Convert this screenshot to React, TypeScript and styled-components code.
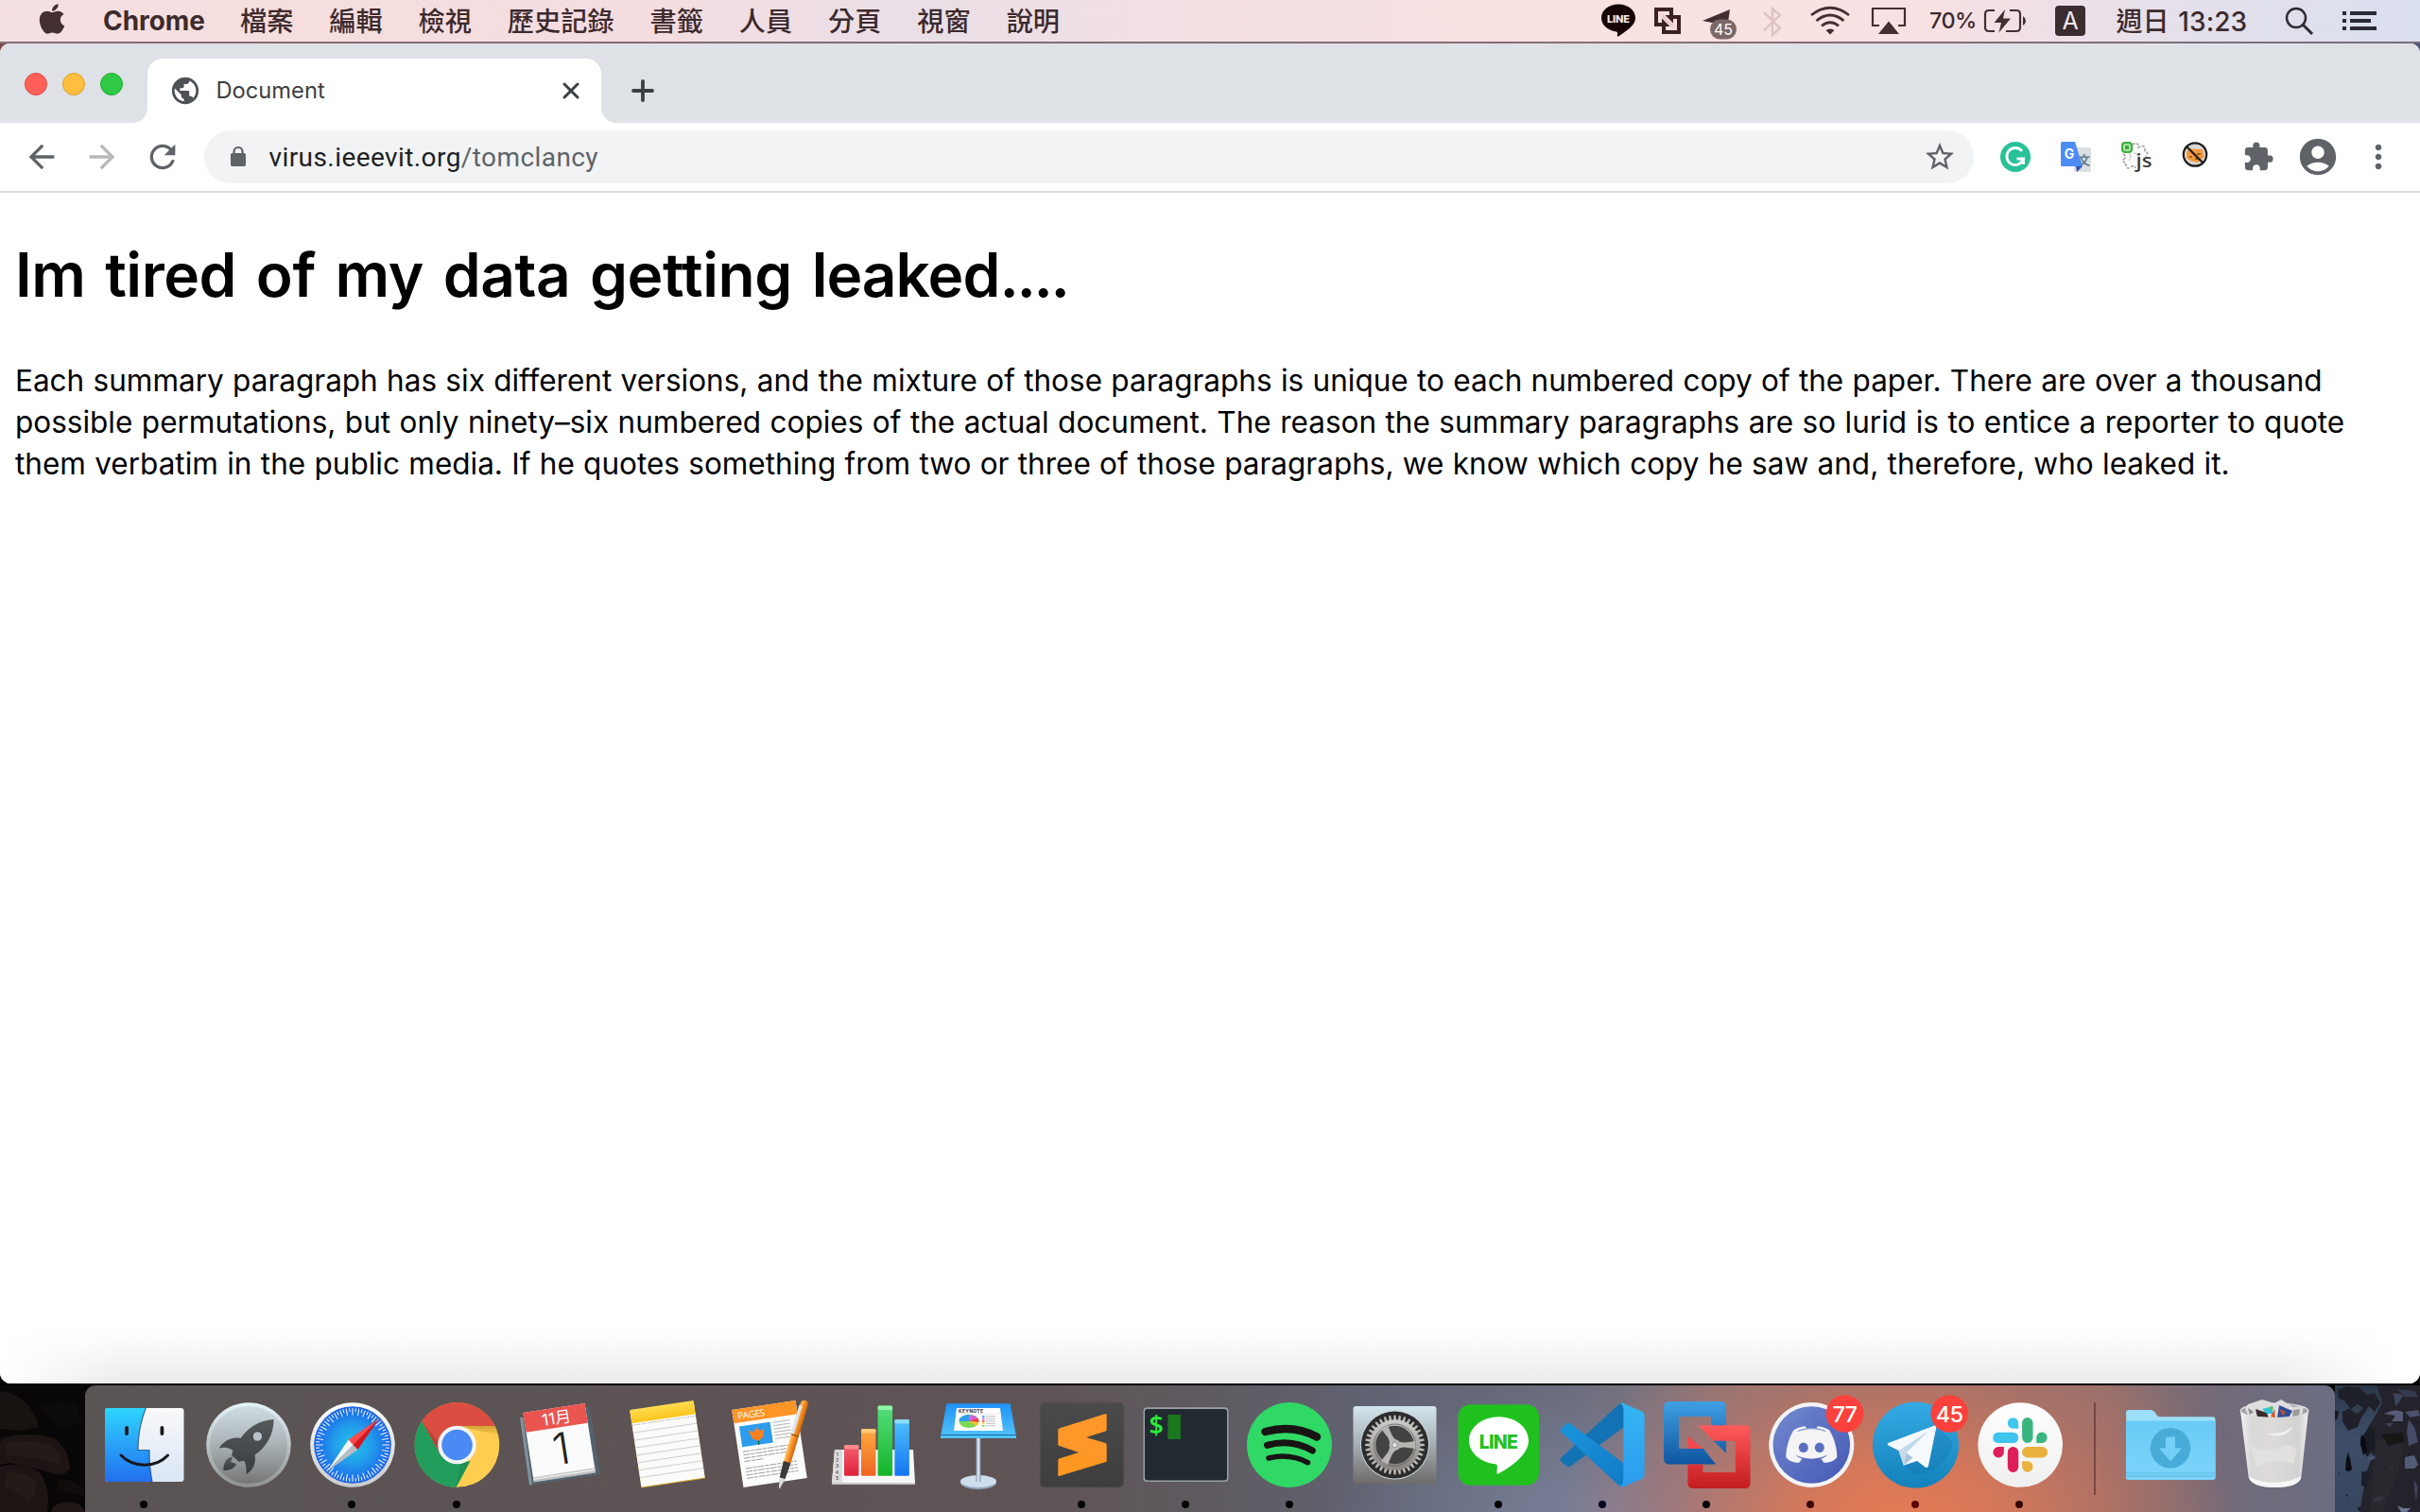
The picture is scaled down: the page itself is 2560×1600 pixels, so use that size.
import React from "react";
import styled, { createGlobalStyle } from "styled-components";
import { FaApple } from "react-icons/fa";
import {
  MdPublic,
  MdArrowBack,
  MdArrowForward,
  MdRefresh,
  MdStarBorder,
  MdExtension,
  MdAccountCircle,
  MdMoreVert,
} from "react-icons/md";

const GlobalStyle = createGlobalStyle`
  * { box-sizing: border-box; }
  html, body { margin: 0; padding: 0; background: #0b0a0c; }
  svg { display: block; flex: none; }
`;

const UI_FONT = `Inter, "Noto Sans CJK TC", sans-serif`;

/* ---------- desktop ---------- */

const Desktop = styled.div`
  width: 2560px;
  height: 1600px;
  overflow: hidden;
  display: flex;
  flex-direction: column;
  font-family: ${UI_FONT};
  background: linear-gradient(180deg, rgba(6, 6, 8, 0) 50%, #060608 60%),
    linear-gradient(90deg, #7d4a4c 0%, #6f4347 40%, #5a3f4e 50%, #7b4b4e 66%, #6b4650 82%, #3c3f5e 92%, #4a5378 100%);
`;

/* ---------- menu bar ---------- */

const MenuBar = styled.header`
  height: 46px;
  flex: none;
  display: flex;
  align-items: center;
  border-bottom: 2px solid rgba(40, 15, 30, 0.55);
  color: #3d2a2d;
  background: linear-gradient(
    90deg,
    #f4dfe1 0%,
    #f6dede 12%,
    #f4dde0 27%,
    #eadfe7 37%,
    #ecdfe5 42%,
    #f4e0e2 52%,
    #fae2e1 66%,
    #f7e1e2 80%,
    #ebdfe8 86%,
    #e2e0eb 92%,
    #dadfee 100%
  );
`;

const AppleSlot = styled.div`
  width: 109px;
  padding-left: 41px;
  margin-top: -5px;
`;

const AppName = styled.span`
  width: 145px;
  font-size: 27.9px;
  font-weight: 700;
  line-height: 44px;
  letter-spacing: 0;
`;

const MenuList = styled.nav`
  display: flex;
  gap: 37.9px;
  margin-top: -2px;
`;

const MenuItem = styled.span`
  font-family: "Noto Sans CJK TC", sans-serif;
  font-size: 28.2px;
  font-weight: 500;
  line-height: 44px;
  white-space: nowrap;
`;

const StatusArea = styled.div`
  margin-left: auto;
  display: flex;
  align-items: center;
  height: 44px;
`;

const StatusItem = styled.div<{ $w: number }>`
  width: ${(p) => p.$w}px;
  height: 44px;
  flex: none;
  display: flex;
  align-items: center;
  white-space: nowrap;
`;

const Percent = styled.span`
  font-size: 23.5px;
  letter-spacing: -0.6px;
  font-weight: 500;
  margin-top: -1px;
`;

const Clock = styled.span`
  font-size: 28px;
  font-weight: 500;
  letter-spacing: 0.1px;
  word-spacing: 2px;
  margin-top: -2px;
`;

const Glyph = ({ w, children }: { w: number; children: React.ReactNode }) => (
  <svg width={w} height={44} viewBox={`0 0 ${w} 44`} fill="none">
    {children}
  </svg>
);

const INK = "#432e31";

/* ---------- browser ---------- */

const BrowserWindow = styled.section`
  height: 1418px;
  flex: none;
  display: flex;
  flex-direction: column;
  border-radius: 10px 10px 12px 12px;
  overflow: hidden;
  background: #fff;
`;

const TabStrip = styled.div`
  height: 84px;
  flex: none;
  display: flex;
  align-items: flex-end;
  background: #dee1e6;
`;

const TrafficLights = styled.div`
  width: 140px;
  height: 84px;
  padding: 31px 0 0 26px;
  display: flex;
  gap: 16px;
`;

const Light = styled.span<{ $fill: string; $edge: string }>`
  width: 24px;
  height: 24px;
  border-radius: 50%;
  background: ${(p) => p.$fill};
  border: 1px solid ${(p) => p.$edge};
`;

const TabFlare = styled.span<{ $side: "left" | "right" }>`
  width: 16px;
  height: 16px;
  background: radial-gradient(
    circle at ${(p) => (p.$side === "left" ? "0 0" : "16px 0")},
    #dee1e6 15.5px,
    #fff 16.5px
  );
`;

const Tab = styled.div`
  width: 480px;
  height: 68px;
  padding: 0 20px 0 23px;
  border-radius: 16px 16px 0 0;
  background: #fff;
  display: flex;
  align-items: center;
  color: #3c4043;
`;

const TabTitle = styled.span`
  margin: -2px 0 0 15.5px;
  flex: 1;
  font-size: 23.7px;
  font-weight: 400;
`;

const NewTab = styled.div`
  height: 68px;
  padding-left: 16px;
  display: flex;
  align-items: center;
`;

const Toolbar = styled.div`
  height: 74px;
  flex: none;
  display: flex;
  align-items: center;
  border-bottom: 2px solid #dadce0;
  background: #fff;
  color: #5f6368;
`;

const NavButtons = styled.div`
  width: 216px;
  flex: none;
  padding-left: 24px;
  display: flex;
  gap: 24px;
`;

const NavButton = styled.span<{ $off?: boolean }>`
  opacity: ${(p) => (p.$off ? 0.45 : 1)};
`;

const Omnibox = styled.div`
  width: 1872px;
  flex: none;
  height: 56px;
  border-radius: 28px;
  background: #f1f3f4;
  display: flex;
  align-items: center;
  padding: 0 18px 0 24px;
`;

const Url = styled.span`
  flex: 1;
  margin-left: 20.5px;
  font-family: Roboto, sans-serif;
  font-size: 28px;
  letter-spacing: 0.42px;
  color: #5f6368;
`;

const Host = styled.span`
  color: #202124;
`;

const Extensions = styled.div`
  flex: 1;
  min-width: 0;
  height: 72px;
  display: flex;
  align-items: center;
`;

const ExtensionSlot = styled.div<{ $w: number }>`
  width: ${(p) => p.$w}px;
  flex: none;
  display: flex;
  justify-content: center;
`;

const Page = styled.main`
  flex: 1;
  display: flex;
  flex-direction: column;
  padding: 0 16px;
  color: #000;
  font-family: Inter, sans-serif;
`;

const Heading = styled.h1`
  margin: 42px 0 0;
  font-size: 64px;
  line-height: 90px;
  font-weight: 600;
  letter-spacing: -0.45px;
  word-spacing: 5.1px;
  white-space: nowrap;
`;

const HeadingTail = styled.span`
  letter-spacing: -1px;
`;

const Dots = styled.span`
  letter-spacing: -2.4px;
`;

const Paragraph = styled.p`
  margin: 45px 0 0;
  font-size: 31.5px;
  line-height: 44px;
  flex: 1;
`;

const Line = styled.span<{ $gap: number }>`
  display: block;
  white-space: nowrap;
  word-spacing: ${(p) => p.$gap}px;
`;

const DockShade = styled.div`
  height: 64px;
  margin: 0 -16px;
  background: linear-gradient(90deg, #fff 0%, rgba(255, 255, 255, 0) 5%, rgba(255, 255, 255, 0) 94%, #fff 99%),
    linear-gradient(180deg, #fff 0%, #fcfcfc 25%, #f4f4f4 60%, #ebebeb 100%);
`;

/* ---------- dock ---------- */

const BottomArea = styled.footer`
  height: 136px;
  flex: none;
  display: flex;
  align-items: flex-end;
  background: #020203;
`;

const DockPanel = styled.div`
  width: 2380px;
  height: 134px;
  padding-left: 6.8px;
  border-radius: 11px 11px 0 0;
  display: flex;
  background: radial-gradient(ellipse 360px 240px at 1920px 150px, #e67b54 0%, rgba(222, 120, 86, 0.88) 30%, rgba(200, 114, 94, 0.45) 68%, rgba(150, 110, 110, 0) 100%),
    radial-gradient(ellipse 300px 150px at 1620px 140px, #7a819c 0%, rgba(122, 129, 156, 0) 100%),
    linear-gradient(90deg, #5a5454 0%, #5d5354 30%, #5f5455 42%, #5e5a60 50%, #616474 58%, #6a6c7c 66%, #8a7678 73%, #8f706e 90%, #726a79 95%, #6b6e82 100%);
`;

const DockItem = styled.div`
  width: 110.22px;
  flex: none;
  display: flex;
  flex-direction: column;
  align-items: center;
  padding-top: 3px;
`;

const RunningDot = styled.span<{ $color: string }>`
  width: 8px;
  height: 8px;
  margin-top: -1px;
  border-radius: 50%;
  background: ${(p) => p.$color};
`;

const Divider = styled.div`
  width: 2px;
  height: 98px;
  margin: 18px 24px 0 24px;
  background: rgba(70, 30, 30, 0.5);
`;

const DockSvg = styled.svg`
  margin: 0 -5px;
`;

const T = { fontFamily: "Inter, sans-serif" };

const Icon = ({ children }: { children: React.ReactNode }) => (
  <DockSvg width={120} height={120} viewBox="-60 -60 120 120">
    {children}
  </DockSvg>
);

const Finder = () => (
  <Icon>
    <defs>
      <linearGradient id="fiB" x1="0" y1="0" x2="0" y2="1"><stop offset="0" stopColor="#2dd5fd" /><stop offset="1" stopColor="#236ff0" /></linearGradient>
      <linearGradient id="fiW" x1="0" y1="0" x2="0" y2="1"><stop offset="0" stopColor="#f8f8f9" /><stop offset="1" stopColor="#d9e6f5" /></linearGradient>
    </defs>
    <rect x={-41} y={-39} width={83.5} height={78} rx={3} fill="url(#fiW)" />
    <path d="M-38-39H2.3C-4-23-6-8-6 5.500H6C6 18 7 29 9 39H-38a3 3 0 0 1-3-3V-36a3 3 0 0 1 3-3Z" fill="url(#fiB)" />
    <path d="M2.300-39C-4-23-6-8-6 5.500H6C6 18 7 29 9 39" fill="none" stroke="#13396b" strokeWidth={1.2} opacity={0.7} />
    <path d="M-18-18v6M19.400-18v6" stroke="#1a1a1c" strokeWidth={3.8} strokeLinecap="round" />
    <path d="M-24 11C-11 24.500 13 24.500 25.500 11" fill="none" stroke="#17181c" strokeWidth={3} strokeLinecap="round" />
  </Icon>
);

const Launchpad = () => (
  <Icon>
    <defs>
      <linearGradient id="lpG" x1="0" y1="0" x2="0" y2="1"><stop offset="0" stopColor="#cfdde3" /><stop offset="0.5" stopColor="#a9b1b5" /><stop offset="1" stopColor="#767676" /></linearGradient>
      <linearGradient id="lpR" x1="0" y1="0" x2="0" y2="1"><stop offset="0" stopColor="#e6f5fa" /><stop offset="1" stopColor="#8f9192" /></linearGradient>
      <linearGradient id="lpK" x1="0" y1="0" x2="0" y2="1"><stop offset="0" stopColor="#55595b" /><stop offset="1" stopColor="#393d40" /></linearGradient>
    </defs>
    <circle cx={1} cy={0} r={44.800} fill="url(#lpR)" />
    <circle cx={1} cy={0} r={41} fill="url(#lpG)" />
    <g fill="url(#lpK)">
      <path d="M27.500-27C12-26 0-18-7.500-7C-17-9-26-4-30.500 3.700C-25 2-20 3-15.500 6L-17 11L-9 18L-4 16.500C-1 21-1.500 26-1.500 31C6 27 9 19 7.600 10.500C19 3 27.500-10 27.500-27Z" />
      <path d="M-25.600 27C-26 19-22 13-15.600 12.500L-18 18L-12 20C-14 25-19 27-25.600 27Z" />
    </g>
    <circle cx={10.400} cy={-9} r={5.200} fill="#b8c2c7" stroke="#34383a" strokeWidth={0.8} />
  </Icon>
);

const Safari = () => (
  <Icon>
    <defs>
      <radialGradient id="saB"><stop offset="0" stopColor="#22c3e6" /><stop offset="0.5" stopColor="#229ceb" /><stop offset="1" stopColor="#1b62ea" /></radialGradient>
      <linearGradient id="saR" x1="0" y1="0" x2="0" y2="1"><stop offset="0" stopColor="#fff" /><stop offset="1" stopColor="#c9cbcd" /></linearGradient>
    </defs>
    <circle cx={1} cy={0} r={44.800} fill="url(#saR)" />
    <circle cx={1} cy={0} r={40.800} fill="url(#saB)" />
    <g stroke="#e7f3fd" strokeWidth={1.1} transform="translate(1 0)">
      {Array.from({ length: 72 }, (_, i) => (
        <path key={i} d={`M0-39V${i % 2 ? -35 : -31.5}`} transform={`rotate(${i * 5})`} />
      ))}
    </g>
    <path d="M29-28L-3.400-5.600L1.500 0Z" fill="#ff4a49" />
    <path d="M29-28L1.500 0L6.500 5Z" fill="#d9141c" />
    <path d="M-26 28L-3.400-5.600L1.500 0Z" fill="#f4f4f4" />
    <path d="M-26 28L1.500 0L6.500 5Z" fill="#b9bcc0" />
  </Icon>
);

const ChromeLogo = () => (
  <Icon>
    <defs>
      <clipPath id="chC"><circle r={45} /></clipPath>
      <linearGradient id="chS" x1="0" y1="0" x2="0" y2="1"><stop offset="0" stopColor="#a87b1e" stopOpacity={0.5} /><stop offset="1" stopColor="#a87b1e" stopOpacity={0} /></linearGradient>
    </defs>
    <g transform="translate(0.500 0)" clipPath="url(#chC)">
      <circle r={45} fill="#ffcd4f" />
      <path d="M0-20H50V-9Z" fill="url(#chS)" />
      <path d="M-60-66L-36.500-24L-17.500 10L0 20L14 17L-1.500 46L-60 60Z" fill="#239d5c" />
      <path d="M-37-24.500L-17 11L0 0L0-20H50V-60H-60Z" fill="#dc4d41" />
      <path d="M-37-24.500L-17 11L-20-3Z" fill="#97352d" opacity={0.5} />
      <path d="M14 17L-1.500 46L4 18Z" fill="#1a7d48" opacity={0.4} />
      <circle r={20.300} fill="#f4f4f4" />
      <circle r={16.300} fill="#4a8af4" />
    </g>
  </Icon>
);

const CalendarIcon = () => (
  <Icon>
    <path d="M-43-29L30.500-40L42 31L-33 42.600Z" fill="#53636d" />
    <path d="M-43-29L-40-29.500L-30 42L-33 42.600Z" fill="#81929c" />
    <g transform="translate(-1.500 -3.500) rotate(-8.800)">
      <rect x={-33} y={-36} width={66} height={74} fill="#fbfbfb" />
      <rect x={-33} y={-36} width={66} height={21} fill="#ea5550" />
      <rect x={-33} y={33} width={66} height={2} fill="#cfcfcf" />
      <rect x={-33} y={36} width={66} height={2.500} fill="#bdbdbd" />
      <text x={1} y={-19} textAnchor="middle" fill="#fff" fontSize={17} style={{ fontFamily: `Inter, "Noto Sans CJK TC", sans-serif` }}>11月</text>
      <text x={1} y={24} textAnchor="middle" fill="#222" fontSize={46} fontWeight={300} style={T}>1</text>
    </g>
  </Icon>
);

const NotesIcon = () => (
  <Icon>
    <defs>
      <linearGradient id="noY" x1="0" y1="0" x2="0" y2="1"><stop offset="0" stopColor="#ffdc50" /><stop offset="1" stopColor="#fbc51d" /></linearGradient>
    </defs>
    <g transform="translate(3 -1) rotate(-8.500)">
      <rect x={-34} y={-40} width={68} height={82} fill="#d4a92a" />
      <rect x={-34} y={-40} width={68} height={81} fill="#fbfbfa" />
      <rect x={-34} y={-41.500} width={68} height={14.500} fill="url(#noY)" />
      <path d="M-34-25H34" stroke="#8f8f8f" strokeWidth={1} strokeDasharray="1 1.500" />
      {[-17, -9, -1, 7, 15, 23, 31].map((y) => (
        <path key={y} d={`M-34 ${y}H34`} stroke="#c9c9c9" strokeWidth={0.900} />
      ))}
    </g>
  </Icon>
);

const PagesIcon = () => (
  <Icon>
    <defs>
      <linearGradient id="paP" x1="0" y1="0" x2="1" y2="0"><stop offset="0" stopColor="#ffc15c" /><stop offset="0.600" stopColor="#f2851f" /><stop offset="1" stopColor="#cf640b" /></linearGradient>
    </defs>
    <g transform="translate(1 -1) rotate(-8.500)">
      <rect x={-34} y={-41.500} width={68} height={83} fill="#fcfcfc" />
      <rect x={-34} y={-41.500} width={68} height={14.500} fill="#fd9527" />
      <text x={-29} y={-30.500} fontSize={10} fill="#fff" style={{ fontFamily: `"Open Sans", sans-serif` }} textLength={29}>PAGES</text>
      <rect x={-29} y={-23} width={33} height={22} fill="#2d9ced" />
      <path d="M-20-18L-15-15L-11-19L-8-15L-3-17L-6-8L-11-5L-17-8Z" fill="#f8801f" />
      <path d="M-11-5V-1" stroke="#1d5c2a" strokeWidth={1.200} />
      {[-22, -18.500, -15, -11.500, -8, -4.500].map((y) => (
        <path key={y} d={`M7 ${y}H25`} stroke="#aaa" strokeWidth={0.800} />
      ))}
      {[4, 7.500, 11, 14.500, 22, 25.500, 29, 32.500].map((y, i) => (
        <path key={y} d={`M-29 ${y}H${i === 3 ? -8 : 26}`} stroke="#9a9a9a" strokeWidth={0.900} strokeDasharray="7 1 4 1" />
      ))}
    </g>
    <g transform="translate(39 -47) rotate(16.500)">
      <rect x={-4} y={0} width={8} height={70} rx={3.500} fill="url(#paP)" />
      <rect x={-5} y={6} width={3.500} height={32} rx={1.500} fill="#dfe5ea" />
      <rect x={-4} y={38} width={8} height={1.200} fill="#9b4c08" />
      <path d="M-4 68H4L3 86H-3Z" fill="#3b3b3d" />
      <path d="M-3 86H3L0.500 97H-0.500Z" fill="#d9dde0" />
    </g>
  </Icon>
);

const NUMBER_BARS = [
  { x: -30, y: 0, a: "#f3626e", b: "#e0203c", cap: "#ff8b8d" },
  { x: -12, y: -17, a: "#fdab40", b: "#ef6423", cap: "#ffc776" },
  { x: 5.6, y: -41.5, a: "#55dd7d", b: "#14b428", cap: "#8df5a5" },
  { x: 23.4, y: -27, a: "#4fc3fc", b: "#1375f0", cap: "#8adcff" },
];

const NumbersIcon = () => (
  <Icon>
    <path d="M-40 5H43L45 40H-43Z" fill="#f7f7f7" />
    <path d="M-40 5H-32V40H-43Z" fill="#dcdcdc" />
    <path d="M-43 40H45V42H-43Z" fill="#c8c8c8" />
    {NUMBER_BARS.map((b, i) => (
      <g key={b.x}>
        <defs>
          <linearGradient id={`nu${i}`} x1="0" y1="0" x2="0" y2="1"><stop offset="0" stopColor={b.a} /><stop offset="1" stopColor={b.b} /></linearGradient>
        </defs>
        <rect x={b.x} y={b.y} width={15.500} height={32.700 - b.y} rx={1.500} fill={`url(#nu${i})`} />
        <rect x={b.x} y={b.y} width={15.500} height={4.500} rx={1.500} fill={b.cap} />
      </g>
    ))}
    {[1, 2, 3, 4, 5].map((n) => (
      <text key={n} x={-37.500} y={5.500 + n * 6.300} textAnchor="middle" fontSize={5} fontWeight={700} fill="#666" style={T}>{n}</text>
    ))}
  </Icon>
);

const KeynoteIcon = () => (
  <Icon>
    <defs>
      <linearGradient id="keB" x1="0" y1="0" x2="0" y2="1"><stop offset="0" stopColor="#1e93f7" /><stop offset="1" stopColor="#56c4fa" /></linearGradient>
      <linearGradient id="keS" x1="0" y1="0" x2="1" y2="0"><stop offset="0" stopColor="#8296a8" /><stop offset="0.500" stopColor="#e8f0f8" /><stop offset="1" stopColor="#7488a0" /></linearGradient>
    </defs>
    <ellipse cx={1} cy={40} rx={19} ry={7} fill="#8fa5bb" />
    <ellipse cx={1} cy={38.500} rx={19} ry={6.500} fill="#cfdeec" />
    <rect x={-1.500} y={-8} width={5} height={47} fill="url(#keS)" />
    <path d="M-32.600-43.700H34.600L41-9V-7H-39V-9Z" fill="url(#keB)" />
    <path d="M-39-10.500H41" stroke="#0e6fae" strokeWidth={1.200} />
    <path d="M-22-39H24L27-15H-25Z" fill="#fdfdfd" />
    <text x={-20} y={-34.300} fontSize={5} fontWeight={700} fill="#333" textLength={26} style={T}>KEYNOTE</text>
    <path d="M-20-33H24" stroke="#ccc" strokeWidth={0.500} />
    <ellipse cx={-9} cy={-25} rx={10.500} ry={7} fill="#7ed957" />
    <path d="M-9-25H-19.500A10.500 7 0 0 1-8-32Z" fill="#2c9df0" />
    <path d="M-9-25L-7-32A10.500 7 0 0 1 0-28.500Z" fill="#d45ce0" />
    <path d="M-9-25L0-28.500A10.500 7 0 0 1 1.500-24Z" fill="#ef3d4c" />
    <path d="M-9-25L1.500-24A10.500 7 0 0 1-1-20Z" fill="#fcc62f" />
    {["#2c9df0", "#d45ce0", "#ef3d4c", "#fcc62f", "#7ed957"].map((c, i) => (
      <g key={c}>
        <rect x={5} y={-31 + i * 2.500} width={2.500} height={1.700} fill={c} />
        <rect x={9} y={-30.700 + i * 2.500} width={10} height={0.900} fill="#bbb" />
      </g>
    ))}
  </Icon>
);

const SublimeIcon = () => (
  <Icon>
    <defs>
      <linearGradient id="suG" x1="0" y1="0" x2="0" y2="1"><stop offset="0" stopColor="#4a4a4a" /><stop offset="1" stopColor="#3e3e3e" /></linearGradient>
    </defs>
    <rect x={-44} y={-45} width={89} height={90} rx={5} fill="url(#suG)" stroke="#565252" strokeWidth={1} />
    <path d="M-24.700 16Q-24.700 15 -23.500 14.500L10 4L26.700 17.700L-23.500 33Q-24.700 33.300-24.700 32Z" fill="#ff9822" />
    <path d="M-2 7.700L26.700 17.700L14 10Z" fill="#c97a25" />
    <path d="M25.500-33Q26.700-33.300 26.700-32V-16Q26.700-15 25.500-14.500L5-8L25.500-2Q26.700-1.500 26.700-0.500V17.700L-23.500 1Q-24.700 0.500-24.700-0.500V-16Q-24.700-17-23.500-17.500Z" fill="#ff9829" />
  </Icon>
);

const TerminalIcon = () => (
  <Icon>
    <rect x={-44.500} y={-39.700} width={90} height={78.700} rx={4} fill="#9aa2a5" />
    <rect x={-43} y={-38} width={87} height={75.500} rx={3} fill="#222a31" />
    <text x={-38.500} y={-11} fontSize={27} fontWeight={600} fill="#2bee3c" style={{ fontFamily: `"Open Sans", sans-serif` }}>$</text>
    <rect x={-18.600} y={-32} width={13.500} height={26} fill="#1a761f" />
  </Icon>
);

const SpotifyIcon = () => (
  <Icon>
    <circle cx={0} r={45} fill="#30d866" />
    <g fill="none" stroke="#191414" strokeLinecap="round">
      <path d="M-25.500-14Q4-22 29-8.500" strokeWidth={8.500} />
      <path d="M-23.500 0.300Q2-7 24.400 6" strokeWidth={7} />
      <path d="M-22 14Q0 8.500 19.500 18.700" strokeWidth={5.500} />
    </g>
  </Icon>
);

const SettingsIcon = () => (
  <Icon>
    <defs>
      <linearGradient id="seG" x1="0" y1="0" x2="0" y2="1"><stop offset="0" stopColor="#d4e6ee" /><stop offset="0.500" stopColor="#a5adb1" /><stop offset="1" stopColor="#6d6b69" /></linearGradient>
      <linearGradient id="seM" x1="0" y1="0" x2="0" y2="1"><stop offset="0" stopColor="#c9c9c7" /><stop offset="1" stopColor="#8a8784" /></linearGradient>
    </defs>
    <rect x={-43.500} y={-41} width={88} height={82} rx={3} fill="url(#seG)" />
    <circle cx={0.500} r={36.500} fill="#c4d3da" />
    <circle cx={0.500} r={35.500} fill="#2c2c2d" />
    <g transform="translate(0.500 0)">
      {Array.from({ length: 36 }, (_, i) => (
        <path key={i} d="M-1.700-25L-1-31.500H1L1.700-25Z" fill="#bbbab8" transform={`rotate(${i * 10})`} />
      ))}
      <circle r={23.500} fill="#444342" stroke="url(#seM)" strokeWidth={6.500} />
      <circle r={22} fill="none" stroke="#5c5a58" strokeWidth={0.800} />
      {[0, 120, 240].map((a) => (
        <path key={a} d="M0-4L10-2.500L22-4V4L10 2.500L0 4Z" fill="#b7b5b2" transform={`rotate(${a})`} />
      ))}
      <circle r={6} fill="#b7b5b2" />
      <circle r={2.800} fill="#dbe2e8" stroke="#666" strokeWidth={0.600} />
    </g>
  </Icon>
);

const LineIcon = () => (
  <Icon>
    <rect x={-42.500} y={-42.700} width={85.500} height={85.400} rx={13} fill="#20c11f" />
    <path d="M0.500-29.700C18-29.700 32-18.500 32-4.500C32 10 14 23 0 30.500C-2 31.500-1.500 28-1.200 25C-1 22-1 20.500-3.500 20.200C-19 18.500-31 8-31-4.500C-31-18.500-17-29.700 0.500-29.700Z" fill="#fff" />
    <text x={0.300} y={3.500} textAnchor="middle" fontSize={19.500} fontWeight={800} fill="#20c11f" textLength={41} style={T}>LINE</text>
  </Icon>
);

const VscodeIcon = () => (
  <Icon>
    <defs>
      <linearGradient id="vsR" x1="0" y1="0" x2="0" y2="1"><stop offset="0" stopColor="#34b5f3" /><stop offset="1" stopColor="#2c9cee" /></linearGradient>
      <linearGradient id="vsL" x1="0" y1="0" x2="1" y2="1"><stop offset="0" stopColor="#1a95dc" /><stop offset="1" stopColor="#127ac6" /></linearGradient>
    </defs>
    <path d="M-43.500 13.500L17.500-43Q20-45 23-43.500V-19L-33.500 22.500Q-36.500 24-38.500 22L-43.500 17.500Q-45.500 15.500-43.500 13.500Z" fill="#1272b4" />
    <path d="M-43.500-17L-38.500-22Q-36-24-33.500-22.200L22.500 19.300V43.500Q19.500 45 17 42.500L-43.500-13.500Q-45.500-15-43.500-17Z" fill="url(#vsL)" />
    <path d="M22.400-44L41.500-35.500Q44.600-34 44.600-31V31.500Q44.600 34.500 41.500 36L23 44Q20 44.500 18 43.500Q22.400 42 22.400 38V-38Q22.400-42 19-44Q21-44.500 22.400-44Z" fill="url(#vsR)" />
  </Icon>
);

const VmwareIcon = () => (
  <Icon>
    <defs>
      <linearGradient id="vmB" x1="0" y1="0" x2="0" y2="1"><stop offset="0" stopColor="#409fe3" /><stop offset="1" stopColor="#0f55a0" /></linearGradient>
      <linearGradient id="vmR" x1="0" y1="0" x2="0" y2="1"><stop offset="0" stopColor="#ff5a5c" /><stop offset="1" stopColor="#c41c20" /></linearGradient>
    </defs>
    <path d="M-39-46H15Q21-46 21-40V9L5-7V-30H-29V4H-3L10 20.500H-39Q-45 20.500-45 14.500V-40Q-45-46-39-46Z" fill="url(#vmB)" />
    <path d="M-8.500-20.700H40.500Q46.500-20.700 46.500-14.700V40Q46.500 46 40.500 46H-13.600Q-19.600 46-19.600 40V20.500H-3.500V29H30.800V-4.300H7.500Z" fill="url(#vmR)" />
    <path d="M-19.600-9.700L-4 4H-19.600Z" fill="#f4484c" />
  </Icon>
);

const Badge = ({ children }: { children: React.ReactNode }) => (
  <>
    <circle cx={35.700} cy={-33} r={19.800} fill="#fb413c" />
    <text x={35.500} y={-24.500} textAnchor="middle" fontSize={23.500} fontWeight={500} fill="#fff" letterSpacing={-0.800} style={T}>{children}</text>
  </>
);

const DiscordIcon = () => (
  <Icon>
    <defs>
      <linearGradient id="diG" x1="0" y1="0" x2="1" y2="1"><stop offset="0" stopColor="#7289cf" /><stop offset="1" stopColor="#4458b4" /></linearGradient>
    </defs>
    <g transform="translate(0.800 0)">
      <circle cx={0.500} r={45} fill="#f3f3f5" />
      <circle cx={0.500} r={40.800} fill="url(#diG)" />
      <path d="M-6-19.700C-11-19.500-15.500-17.500-18.500-15.500C-23.500-7-26.500 3-26.500 13C-23 17.500-17.500 19-12.500 18.700L-9.500 14.500C-12.500 13.500-14.500 12.500-16.500 10.500C-6 16 7 16 17.500 10.500C15.500 12.500 13.500 13.500 10.500 14.500L13.500 18.700C18.500 19 24 17.500 27.500 13C27.500 3 24.500-7 19.500-15.500C16.500-17.500 12-19.500 7-19.700L6-17.500C3-18.200-2-18.200-5-17.500Z" fill="#f4f4f6" />
      <path d="M-14-14.500C-5-18.300 6-18.300 15-14.500" fill="none" stroke="#6177c4" strokeWidth={1} />
      <ellipse cx={-8} cy={2.700} rx={5} ry={5.300} fill="#5b70c0" />
      <ellipse cx={9} cy={2.700} rx={5} ry={5.300} fill="#5b70c0" />
      <Badge>77</Badge>
    </g>
  </Icon>
);

const TelegramIcon = () => (
  <Icon>
    <defs>
      <linearGradient id="teG" x1="0" y1="0" x2="0" y2="1"><stop offset="0" stopColor="#34aae4" /><stop offset="1" stopColor="#1481bb" /></linearGradient>
    </defs>
    <g transform="translate(0.500 0)">
      <circle r={45.600} fill="url(#teG)" />
      <path d="M22-20L40-3A45 45 0 0 1 0 32L-12 21Z" fill="#0e6ba8" opacity={0.250} />
      <path d="M-29-2Q-31-0.500-28 1L-18 6L-12.600 21.700L1.400 17L10 23.500Q12.800 25 13.500 22L22-19.500Q22-21.500 20-20.500Z" fill="#f6fafe" />
      <path d="M-18 6L14-15L-10 8.500L-12.600 21.700Z" fill="#c5d9e9" />
      <path d="M-10 8.500L-12.600 21.700L-3 13.500Z" fill="#a8c5dc" />
      <Badge>45</Badge>
    </g>
  </Icon>
);

const SlackIcon = () => (
  <Icon>
    <defs>
      <linearGradient id="slG" x1="0" y1="0" x2="0" y2="1"><stop offset="0" stopColor="#fff" /><stop offset="1" stopColor="#efefef" /></linearGradient>
    </defs>
    <g transform="translate(0.800 0)">
      <circle cx={0.400} r={44.800} fill="url(#slG)" />
      <g fill="#3fc4ee">
        <path d="M-1.600-17.300H-7.300A5.700 5.700 0 1 1-1.600-23Z" />
        <rect x={-28.600} y={-13.300} width={27} height={11.400} rx={5.700} />
      </g>
      <g fill="#3ab57f">
        <rect x={2.300} y={-29} width={11.400} height={27} rx={5.700} />
        <path d="M17.400-2V-7.700A5.700 5.700 0 1 1 23-2Z" />
      </g>
      <g fill="#de1f5c">
        <path d="M-17 2V7.700A5.700 5.700 0 1 1-22.700 2Z" />
        <rect x={-13} y={2} width={11.400} height={27} rx={5.700} />
      </g>
      <g fill="#eab13c">
        <rect x={2.300} y={2} width={27} height={11.400} rx={5.700} />
        <path d="M2.300 17.300H8A5.700 5.700 0 1 1 2.300 23Z" />
      </g>
    </g>
  </Icon>
);

const DownloadsFolder = () => (
  <Icon>
    <defs>
      <linearGradient id="foG" x1="0" y1="0" x2="0" y2="1"><stop offset="0" stopColor="#69cbf6" /><stop offset="1" stopColor="#7dd4fb" /></linearGradient>
    </defs>
    <path d="M-47-34Q-47-37-44-37H-21Q-18-37-16.500-34.500L-14-31Q-13-29.700-11-29.700H45Q47.500-29.700 47.500-27V35Q47.500 37-45 37Z" fill="#9ddff8" />
    <path d="M-47-22Q-47-25.500-44-25.500H44.500Q47.500-25.500 47.500-22V34.500Q47.500 37 45 37H-44.500Q-47 37-47 34.500Z" fill="url(#foG)" />
    <path d="M-47 30H47.500M-47 33H47.500" stroke="#58b4de" strokeWidth={1} />
    <circle cx={0} cy={3.300} r={21.300} fill="#48abd8" />
    <path d="M-5-8.500H5V3.500H12L0 17.500L-12 3.500H-5Z" fill="#73cff7" />
  </Icon>
);

const TrashIcon = () => (
  <Icon>
    <defs>
      <linearGradient id="trG" x1="0" y1="0" x2="1" y2="0"><stop offset="0" stopColor="#f3f3f3" /><stop offset="0.150" stopColor="#d9d9d9" /><stop offset="0.500" stopColor="#dcdbd9" /><stop offset="0.850" stopColor="#d2d2d2" /><stop offset="1" stopColor="#f0f0f0" /></linearGradient>
    </defs>
    <ellipse cx={0} cy={-36} rx={36} ry={8} fill="#a5a6ad" stroke="#e4e4e6" strokeWidth={1.200} />
    <path d="M-28-43L-13-48L0-44L7-48L20-40L31-41L28-28L-26-28L-31-38Z" fill="#dedede" />
    <path d="M-20-38L-8-34L-6-28L-18-29Z" fill="#3d2b2b" />
    <path d="M-13-38L-2-41L-2-33L-8-33Z" fill="#35c2d8" />
    <path d="M-6-40L-1-40L-2-36Z" fill="#57cf49" />
    <path d="M-4-30L0-38L1-28Z" fill="#dd5731" />
    <path d="M5-42L19-36L14-27L3-29Z" fill="#304e94" />
    <path d="M5-38L12-35L9-31Z" fill="#c4572d" />
    <path d="M20-37L27-38L26-30L19-30Z" fill="#9b9b9b" />
    <path d="M-28-39L-22-35L-26-32Z" fill="#8b8b8f" />
    <path d="M-36-36C-30-27 30-27 36-36L28.500 33Q27 45 0.500 45Q-25 45-27.500 33Z" fill="url(#trG)" />
    <path d="M-27.500 33Q-25 45 0.500 45Q27 45 28.500 33Q14 40 0 40Q-16 40-27.500 33Z" fill="#f6f6f6" />
    <path d="M-8-12Q8-10 20-20Q14-8-2-10Z" fill="#f2f2f2" />
    <path d="M-26 0Q-10 10 8 2Q18-2 24 6L20 20Q0 12-18 24Z" fill="#e6e4e2" opacity={0.700} />
  </Icon>
);

const DOCK: { id: string; el: React.ReactNode; dot?: string }[] = [
  { id: "finder", el: <Finder />, dot: "#000" },
  { id: "launchpad", el: <Launchpad /> },
  { id: "safari", el: <Safari />, dot: "#000" },
  { id: "chrome", el: <ChromeLogo />, dot: "#000" },
  { id: "calendar", el: <CalendarIcon /> },
  { id: "notes", el: <NotesIcon /> },
  { id: "pages", el: <PagesIcon /> },
  { id: "numbers", el: <NumbersIcon /> },
  { id: "keynote", el: <KeynoteIcon /> },
  { id: "sublime", el: <SublimeIcon />, dot: "#000" },
  { id: "terminal", el: <TerminalIcon />, dot: "#000" },
  { id: "spotify", el: <SpotifyIcon />, dot: "#000" },
  { id: "settings", el: <SettingsIcon /> },
  { id: "line", el: <LineIcon />, dot: "#000" },
  { id: "vscode", el: <VscodeIcon />, dot: "#03031a" },
  { id: "vmware", el: <VmwareIcon />, dot: "#000" },
  { id: "discord", el: <DiscordIcon />, dot: "#3c0404" },
  { id: "telegram", el: <TelegramIcon />, dot: "#5c0000" },
  { id: "slack", el: <SlackIcon />, dot: "#3a0303" },
];

/* Wallpaper left and right of the dock */
const RockLeft = () => (
  <svg width={90} height={134} viewBox="0 0 90 134">
    <rect width={90} height={134} fill="#080607" />
    <path d="M0 6Q20 8 32 24Q42 38 40 44L20 48L0 46Z" fill="#181210" />
    <path d="M44 22Q60 12 80 20L88 40L60 46Z" fill="#0d0a0a" />
    <path d="M2 56Q30 48 58 56Q74 70 74 88Q70 96 58 94Q34 86 10 82L0 84V60Z" fill="#1c1513" />
    <path d="M6 62Q34 54 58 66Q66 76 64 84Q40 76 8 74Z" fill="#241b18" />
    <path d="M0 86Q24 80 42 92Q54 110 50 134H0Z" fill="#1d1513" />
    <path d="M6 92Q26 90 38 102Q40 116 30 124Q14 110 4 108Z" fill="#241a17" />
    <path d="M56 128Q70 120 84 126L90 134H54Z" fill="#211815" />
    <path d="M62 100Q74 98 88 108V118Q72 112 60 112Z" fill="#100c0c" />
  </svg>
);

const RockRight = () => (
  <svg width={90} height={134} viewBox="0 0 90 134">
    <defs>
      <linearGradient id="snow" x1="0" y1="0" x2="0" y2="1"><stop offset="0" stopColor="#2b3748" /><stop offset="0.400" stopColor="#3d4e66" /><stop offset="1" stopColor="#35465e" /></linearGradient>
    </defs>
    <rect width={90} height={134} fill="#24232b" />
    <path d="M0 0H44L50 18L44 30L34 46L30 60L40 74L34 90L30 112L26 134H0Z" fill="url(#snow)" />
    <path d="M3 4L14 1L26 2L34 10L42 8L48 18L42 28L36 22L28 34L24 44L14 48L8 38L8 28L16 24L10 16L4 14Z" fill="#20202a" />
    <path d="M16 26L24 20L30 24L24 30Z" fill="#33404f" />
    <path d="M27 56L32 50L36 44L42 48L42 66L34 76L30 68L27 64Z" fill="#1a1a23" />
    <path d="M28 52L32 56L34 70L30 74L27 62Z" fill="#0a0c13" />
    <path d="M14 71l2 6 2 12-3 2-4-1 1-12Z" fill="#0a0d14" />
    <path d="M0 26L4 28L2 36L0 36Z" fill="#171821" />
    <path d="M52 30Q62 24 72 28L72 38L60 38L64 32Z" fill="#575b76" />
    <path d="M53 40L62 40L58 44Z" fill="#3f445c" />
    <path d="M62 8L72 10L68 18L64 22Z" fill="#3b455b" />
    <path d="M66 4L84 6L88 12L74 12Z" fill="#343b50" />
    <path d="M74 28L88 26L90 32L80 34Z" fill="#4c516c" />
    <path d="M78 36L84 44L88 60L78 64L76 48Z" fill="#454b66" />
    <path d="M74 76L84 74L88 84L84 88L74 88Z" fill="#555c78" />
    <path d="M84 100L88 108L86 122L84 112Z" fill="#3c4258" />
    <path d="M40 119L52 117L50 122L41 123Z" fill="#59617d" />
    <path d="M66 127L72 130L80 130L76 134H70Z" fill="#6a7391" />
    <path d="M34 76L44 74L42 78L36 80ZM56 86l6-1-1 4ZM62 74l4-1-2 4Z" fill="#4a536d" />
    <path d="M44 60Q60 50 74 62L66 96L50 134H36L40 100Z" fill="#2a2930" opacity={0.800} />
    <path d="M50 52L72 50L74 60L56 64Z" fill="#191616" />
    <path d="M28 92L36 90L34 108L28 106Z" fill="#1c1f2a" />
    <path d="M4 92l1 1-1 2ZM12 115l2 2-2 1ZM24 128l4 2-3 3Z" fill="#141924" />
  </svg>
);

export default function App() {
  return (
    <Desktop>
      <GlobalStyle />
      <MenuBar>
        <AppleSlot>
          <FaApple size={36} color={INK} style={{ width: 28, height: 36 }} />
        </AppleSlot>
        <AppName>Chrome</AppName>
        <MenuList>
          {["檔案", "編輯", "檢視", "歷史記錄", "書籤", "人員", "分頁", "視窗", "說明"].map((m) => (
            <MenuItem key={m}>{m}</MenuItem>
          ))}
        </MenuList>
        <StatusArea>
          <StatusItem $w={54}>
            <Glyph w={40}>
              <path d="M20 4.500C30.500 4.500 38 11 38 19C38 27 28 33 20 38.500C19 39 18.500 38 19 36.500C19.300 35 19 33.600 17.500 33.400C8 32 2 26 2 19C2 11 9.500 4.500 20 4.500Z" fill="#170404" />
              <text x={20} y={24} textAnchor="middle" fontSize={11} fontWeight={800} textLength={24} fill="#fbe8e8" style={T}>LINE</text>
            </Glyph>
          </StatusItem>
          <StatusItem $w={50.5}>
            <Glyph w={36}>
              <rect x={6} y={10} width={16} height={16} stroke="#3b211f" strokeWidth={4} />
              <rect x={14} y={18} width={16} height={16} stroke="#3b211f" strokeWidth={4} />
              <path d="M12 16L24 28" stroke="#f3dada" strokeWidth={5} />
              <path d="M8 12H15L8 19ZM28 32H21L28 25Z" fill="#f3dada" />
              <path d="M12 16L24 28" stroke="#dfc3c3" strokeWidth={1.500} />
            </Glyph>
          </StatusItem>
          <StatusItem $w={66.500}>
            <Glyph w={44}>
              <path d="M4 22L33 10L31 24H14Z" fill={INK} />
              <rect x={12} y={20.500} width={28} height={21} rx={10.500} fill="#7d6868" />
              <text x={26} y={37} textAnchor="middle" fontSize={16} fill="#fff" style={T}>45</text>
            </Glyph>
          </StatusItem>
          <StatusItem $w={50.500}>
            <Glyph w={24}>
              <path d="M3 13L20 30L12 37V9L20 16L3 32" stroke="#dcc2c4" strokeWidth={2.400} />
            </Glyph>
          </StatusItem>
          <StatusItem $w={64}>
            <Glyph w={44}>
              <g stroke={INK} strokeWidth={2.700} fill="none">
                <path d="M2 16Q22 0.500 42 16" />
                <path d="M7.500 22Q22 10 36.500 22" />
                <path d="M13 27.500Q22 20 31 27.500" />
              </g>
              <path d="M17.500 32Q22 29 26.500 32L22 36.500Z" fill={INK} />
            </Glyph>
          </StatusItem>
          <StatusItem $w={63.500}>
            <Glyph w={40}>
              <path d="M10 27H3V9H37V27H30" stroke={INK} strokeWidth={2.200} />
              <path d="M20 22.500L31 36H9Z" fill={INK} />
            </Glyph>
          </StatusItem>
          <StatusItem $w={56}>
            <Percent>70%</Percent>
          </StatusItem>
          <StatusItem $w={75.500}>
            <Glyph w={48}>
              <path d="M13 11H7Q3 11 3 15V29Q3 33 7 33H13M29 11H36Q40 11 40 15V29Q40 33 36 33H25" stroke={INK} strokeWidth={2.200} />
              <path d="M24 10L12.500 24H20L17.500 34.500L30 19.500H22Z" fill={INK} />
              <path d="M43 17Q46 19 46 22Q46 25 43 27Z" fill={INK} />
            </Glyph>
          </StatusItem>
          <StatusItem $w={66}>
            <Glyph w={34}>
              <rect x={1} y={6} width={32} height={32} rx={4} fill="#3b2c30" />
              <text x={17} y={31} textAnchor="middle" fontSize={25} fill="#f4e8ec" style={T}>A</text>
            </Glyph>
          </StatusItem>
          <StatusItem $w={178}>
            <Clock>週日 13:23</Clock>
          </StatusItem>
          <StatusItem $w={60}>
            <Glyph w={32}>
              <circle cx={12} cy={19} r={10} stroke="#2f2a33" strokeWidth={2.500} />
              <path d="M19 26L29 36" stroke="#2f2a33" strokeWidth={3} />
            </Glyph>
          </StatusItem>
          <StatusItem $w={83.500}>
            <Glyph w={38}>
              <path d="M1 14H5M9 14H37M1 22H5M9 22H31M1 30H5M9 30H37" stroke="#2a2935" strokeWidth={3.800} />
            </Glyph>
          </StatusItem>
        </StatusArea>
      </MenuBar>

      <BrowserWindow>
        <TabStrip>
          <TrafficLights>
            <Light $fill="#fe6058" $edge="#e2483f" />
            <Light $fill="#febe3e" $edge="#e0a02f" />
            <Light $fill="#2fc944" $edge="#1fac2f" />
          </TrafficLights>
          <TabFlare $side="left" />
          <Tab>
            <MdPublic size={34} color="#4d5156" />
            <TabTitle>Document</TabTitle>
            <svg width={24} height={24} viewBox="0 0 24 24">
              <path d="M5 5L19 19M19 5L5 19" stroke="#3c4043" strokeWidth={3} strokeLinecap="round" />
            </svg>
          </Tab>
          <TabFlare $side="right" />
          <NewTab>
            <svg width={24} height={24} viewBox="0 0 24 24">
              <path d="M12 2V22M2 12H22" stroke="#3c4043" strokeWidth={3.800} strokeLinecap="round" />
            </svg>
          </NewTab>
        </TabStrip>

        <Toolbar>
          <NavButtons>
            <NavButton><MdArrowBack size={40} /></NavButton>
            <NavButton $off><MdArrowForward size={40} /></NavButton>
            <NavButton><MdRefresh size={40} /></NavButton>
          </NavButtons>
          <Omnibox>
            <svg width={24} height={28} viewBox="0 0 24 28">
              <path d="M7.500 11V8.500a4.500 4.500 0 0 1 9 0V11" fill="none" stroke="#5f6368" strokeWidth={2.200} />
              <rect x={4} y={10} width={16} height={14} rx={1.800} fill="#5f6368" />
            </svg>
            <Url><Host>virus.ieeevit.org</Host>/tomclancy</Url>
            <MdStarBorder size={36} />
          </Omnibox>
          <Extensions>
            <ExtensionSlot $w={88}>
              <svg width={32} height={32} viewBox="0 0 32 32">
                <circle cx={16} cy={16} r={16} fill="#27c298" />
                <path d="M23 10A9 9 0 1 0 24.500 18H17.500M24.500 17.500V24" fill="none" stroke="#fff" strokeWidth={2.800} />
              </svg>
            </ExtensionSlot>
            <ExtensionSlot $w={40}>
              <svg width={32} height={32} viewBox="0 0 32 32">
                <rect x={14} y={6} width={18} height={26} rx={1.500} fill="#dcdfe1" />
                <text x={24.500} y={23.500} textAnchor="middle" fontSize={13} fontWeight={700} fill="#607d8b" style={{ fontFamily: `"Noto Sans CJK SC", sans-serif` }}>文</text>
                <path d="M16 26H23L17 32Z" fill="#3a4fb8" />
                <path d="M1.500 0H15L23 26H1.500Q0 26 0 24.500V1.500Q0 0 1.500 0Z" fill="#4b8cf5" />
                <text x={9} y={18} textAnchor="middle" fontSize={14} fontWeight={700} fill="#fff" style={T}>G</text>
              </svg>
            </ExtensionSlot>
            <ExtensionSlot $w={88}>
              <svg width={32} height={32} viewBox="0 0 32 32">
                <path d="M12 3Q18-1 18 6Q26 2 25 10Q30 12 26 15M2 13Q6 15 3 18Q0 22 5 22Q4 30 10 27Q14 24 15 28" fill="none" stroke="#a5a5a5" strokeWidth={1.700} strokeDasharray="3 1.500" />
                <path d="M8 12Q12 16 8 20M13 12Q17 12 18 16" fill="none" stroke="#cfcfcf" strokeWidth={1.300} />
                <rect width={12} height={12} rx={4} fill="#3fae3f" />
                <rect x={3} y={3} width={6} height={6} rx={1} fill="none" stroke="#c9f3c0" strokeWidth={1.600} />
                <text x={15.500} y={27} fontSize={20} fontWeight={600} fill="#3d3d3f" textLength={17} lengthAdjust="spacingAndGlyphs" style={{ fontFamily: `"Open Sans", sans-serif` }}>js</text>
              </svg>
            </ExtensionSlot>
            <ExtensionSlot $w={36}>
              <svg width={28} height={34} viewBox="0 0 28 34">
                <circle cx={14} cy={14.500} r={12.200} fill="#d9d7d4" stroke="#1a1a1a" strokeWidth={2.200} />
                <path d="M5 12Q8 6 13 9L22 9L24 17L17 23Q8 22 5 18Z" fill="#f19a3e" />
                <path d="M8 17h3M16 14h4M14 19h4" stroke="#7a4a1c" strokeWidth={1.600} />
                <path d="M5 6L22.500 23.500" stroke="#1a1a1a" strokeWidth={2.200} />
              </svg>
            </ExtensionSlot>
            <ExtensionSlot $w={98}><MdExtension size={34} /></ExtensionSlot>
            <ExtensionSlot $w={28}><MdAccountCircle size={46} /></ExtensionSlot>
            <ExtensionSlot $w={100}><MdMoreVert size={40} /></ExtensionSlot>
          </Extensions>
        </Toolbar>

        <Page>
          <Heading>
            Im tired of my data getting <HeadingTail>leaked</HeadingTail><Dots>....</Dots>
          </Heading>
          <Paragraph>
            <Line $gap={0.49}>Each summary paragraph has six different versions, and the mixture of those paragraphs is unique to each numbered copy of the paper. There are over a thousand</Line>
            <Line $gap={0.64}>possible permutations, but only ninety–six numbered copies of the actual document. The reason the summary paragraphs are so lurid is to entice a reporter to quote</Line>
            <Line $gap={0.5}>them verbatim in the public media. If he quotes something from two or three of those paragraphs, we know which copy he saw and, therefore, who leaked it.</Line>
          </Paragraph>
          <DockShade />
        </Page>
      </BrowserWindow>

      <BottomArea>
        <RockLeft />
        <DockPanel>
          {DOCK.map((d) => (
            <DockItem key={d.id}>
              {d.el}
              {d.dot && <RunningDot $color={d.dot} />}
            </DockItem>
          ))}
          <Divider />
          <DockItem><DownloadsFolder /></DockItem>
          <DockItem><TrashIcon /></DockItem>
        </DockPanel>
        <RockRight />
      </BottomArea>
    </Desktop>
  );
}
